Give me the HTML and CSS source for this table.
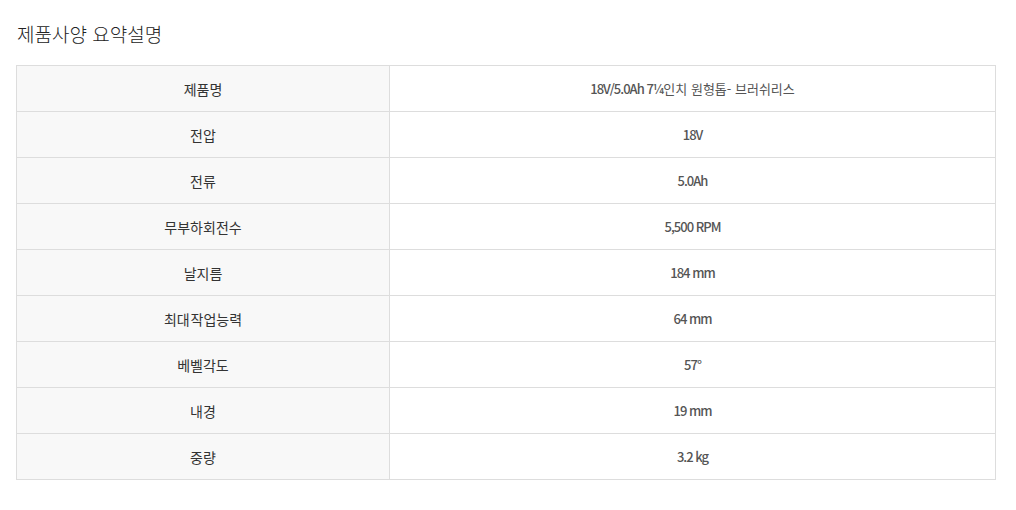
FILE: index.html
```html
<!DOCTYPE html>
<html lang="ko">
<head>
<meta charset="utf-8">
<link rel="stylesheet" href="styles.css">
</head>
<body>
<div class="page">
  <h2 class="title">제품사양 요약설명</h2>
  <table class="spec">
    <tbody>
      <tr><th>제품명</th><td>18V/5.0Ah 7¼<span class="kr">인치 원형톱- 브러쉬리스</span></td></tr>
      <tr><th>전압</th><td>18V</td></tr>
      <tr><th>전류</th><td>5.0Ah</td></tr>
      <tr><th>무부하회전수</th><td>5,500 RPM</td></tr>
      <tr><th>날지름</th><td>184 mm</td></tr>
      <tr><th>최대 작업능력</th><td>64 mm</td></tr>
      <tr><th>베벨각도</th><td>57°</td></tr>
      <tr><th>내경</th><td>19 mm</td></tr>
      <tr><th>중량</th><td>3.2 kg</td></tr>
    </tbody>
  </table>
</div>
</body>
</html>
```
FILE: styles.css
```css
html, body {
  margin: 0;
  padding: 0;
  background: #fff;
}
.page {
  padding: 22px 20px 0 16px;
  font-family: "Noto Sans CJK KR", "Noto Sans", sans-serif;
}
.title {
  margin: 0 0 19px 1px;
  font-size: 19px;
  font-weight: 300;
  color: #222;
  line-height: 24px;
}
.spec {
  width: 980px;
  border-collapse: collapse;
  table-layout: fixed;
}
.spec th, .spec td {
  border: 1px solid #ddd;
  height: 45px;
  padding: 0;
  text-align: center;
  vertical-align: middle;
  line-height: 20px;
}
.spec th {
  width: 372px;
  background: #f8f8f8;
  font-size: 14px;
  font-weight: 400;
  color: #333;
  word-spacing: -3px;
}
.spec td {
  background: #fff;
  font-size: 13px;
  font-weight: 500;
  color: #555;
  letter-spacing: -1px;
}
.spec td .kr {
  font-weight: 400;
  letter-spacing: 0;
}
```
